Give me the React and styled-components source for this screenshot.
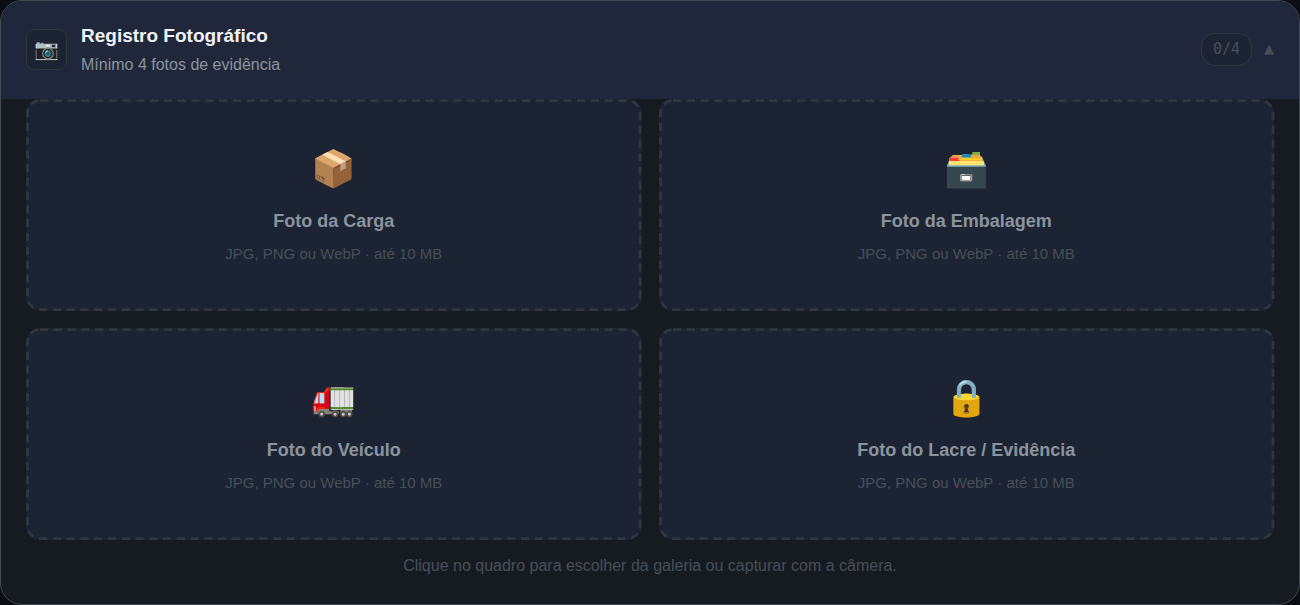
import { useState } from 'react'
import styled, { createGlobalStyle } from 'styled-components'

const GlobalStyle = createGlobalStyle`
    * {
        box-sizing: border-box;
    }

    body {
        margin: 0;
        background: #0a0d13;
        font-family: 'Liberation Sans', Arial, sans-serif;
    }
`

const Section = styled.section`
    overflow: hidden;
    background: #161b22;
    border: 1px solid #444955;
    border-radius: 22px;
`

const Header = styled.button`
    display: flex;
    align-items: center;
    gap: 14px;
    width: 100%;
    padding: 19px 25px 21px;
    border: 0;
    background: #21273b;
    font-family: inherit;
    text-align: left;
    cursor: pointer;
`

const HeaderIcon = styled.span`
    display: flex;
    align-items: center;
    justify-content: center;
    width: 41px;
    height: 41px;
    border: 1px solid #30363d;
    border-radius: 8px;
    background: #1c2333;
    font-size: 20px;
    line-height: 24px;
`

const HeaderText = styled.span`
    display: flex;
    flex: 1;
    flex-direction: column;
`

const Title = styled.span`
    color: #f0f3f6;
    font-size: 19px;
    font-weight: 700;
    line-height: 31px;
`

const Subtitle = styled.span`
    color: #8b949e;
    font-size: 16px;
    line-height: 27px;
`

const Status = styled.span`
    display: flex;
    align-items: center;
    gap: 12px;
`

const Counter = styled.span`
    padding: 3px 11px 4px;
    border: 1px solid #30363d;
    border-radius: 14px;
    background: #1c2333;
    color: #484f58;
    font-family: 'DejaVu Sans Mono', monospace;
    font-size: 15px;
    line-height: 24px;
`

const Arrow = styled.span`
    color: #484f58;
    font-family: 'DejaVu Sans', sans-serif;
    font-size: 13px;
    line-height: 16px;
`

const Grid = styled.div`
    display: grid;
    grid-template-columns: 1fr 1fr;
    gap: 17px;
    padding: 0 25px;
`

const PhotoSlot = styled.label`
    position: relative;
    display: flex;
    flex-direction: column;
    align-items: center;
    padding: 45px 16px;
    border-radius: 14px;
    background: #1c2333;
    cursor: pointer;
`

const DashedOutline = styled.svg`
    position: absolute;
    inset: 0;
    width: 100%;
    height: 100%;
    overflow: visible;
    pointer-events: none;

    rect {
        width: calc(100% - 3px);
        height: calc(100% - 3px);
        fill: none;
        stroke: #30363d;
        stroke-width: 2.75px;
        stroke-dasharray: 8.25 5.52;
    }
`

const FileInput = styled.input`
    position: absolute;
    width: 1px;
    height: 1px;
    opacity: 0;
`

const SlotIcon = styled.span`
    font-size: 36px;
    line-height: 50px;
`

const SlotTitle = styled.span`
    margin-top: 13px;
    color: #8b949e;
    font-size: 18px;
    font-weight: 700;
    line-height: 28px;
`

const SlotHint = styled.span`
    margin-top: 7px;
    color: #484f58;
    font-size: 15px;
    line-height: 24px;
`

const Note = styled.p`
    margin: 0;
    padding: 12px 25px 25px;
    color: #484f58;
    font-size: 16px;
    line-height: 27px;
    text-align: center;
`

const slots = [
    { id: 'carga', icon: '📦', title: 'Foto da Carga' },
    { id: 'embalagem', icon: '🗃️', title: 'Foto da Embalagem' },
    { id: 'veiculo', icon: '🚛', title: 'Foto do Veículo' },
    { id: 'lacre', icon: '🔒', title: 'Foto do Lacre / Evidência' },
]

const App = () => {
    const [isOpen, setIsOpen] = useState(true)
    const [files, setFiles] = useState({})

    const handleChange = (id, file) => {
        setFiles((prev) => ({ ...prev, [id]: file }))
    }

    const count = Object.values(files).filter(Boolean).length

    return (
        <>
            <GlobalStyle />
            <Section>
                <Header
                    type="button"
                    aria-expanded={isOpen}
                    onClick={() => setIsOpen(!isOpen)}
                >
                    <HeaderIcon>📷</HeaderIcon>
                    <HeaderText>
                        <Title>Registro Fotográfico</Title>
                        <Subtitle>Mínimo 4 fotos de evidência</Subtitle>
                    </HeaderText>
                    <Status>
                        <Counter>{count}/4</Counter>
                        <Arrow>{isOpen ? '▲' : '▼'}</Arrow>
                    </Status>
                </Header>
                {isOpen && (
                    <>
                        <Grid>
                            {slots.map(({ id, icon, title }) => (
                                <PhotoSlot key={id} htmlFor={id}>
                                    <DashedOutline aria-hidden="true">
                                        <rect x="1.5" y="1.5" rx="12.5" />
                                    </DashedOutline>
                                    <FileInput
                                        id={id}
                                        type="file"
                                        accept="image/jpeg,image/png,image/webp"
                                        onChange={(e) =>
                                            handleChange(id, e.target.files[0])
                                        }
                                    />
                                    <SlotIcon>{icon}</SlotIcon>
                                    <SlotTitle>{title}</SlotTitle>
                                    <SlotHint>
                                        JPG, PNG ou WebP · até 10 MB
                                    </SlotHint>
                                </PhotoSlot>
                            ))}
                        </Grid>
                        <Note>
                            Clique no quadro para escolher da galeria ou
                            capturar com a câmera.
                        </Note>
                    </>
                )}
            </Section>
        </>
    )
}

export default App
